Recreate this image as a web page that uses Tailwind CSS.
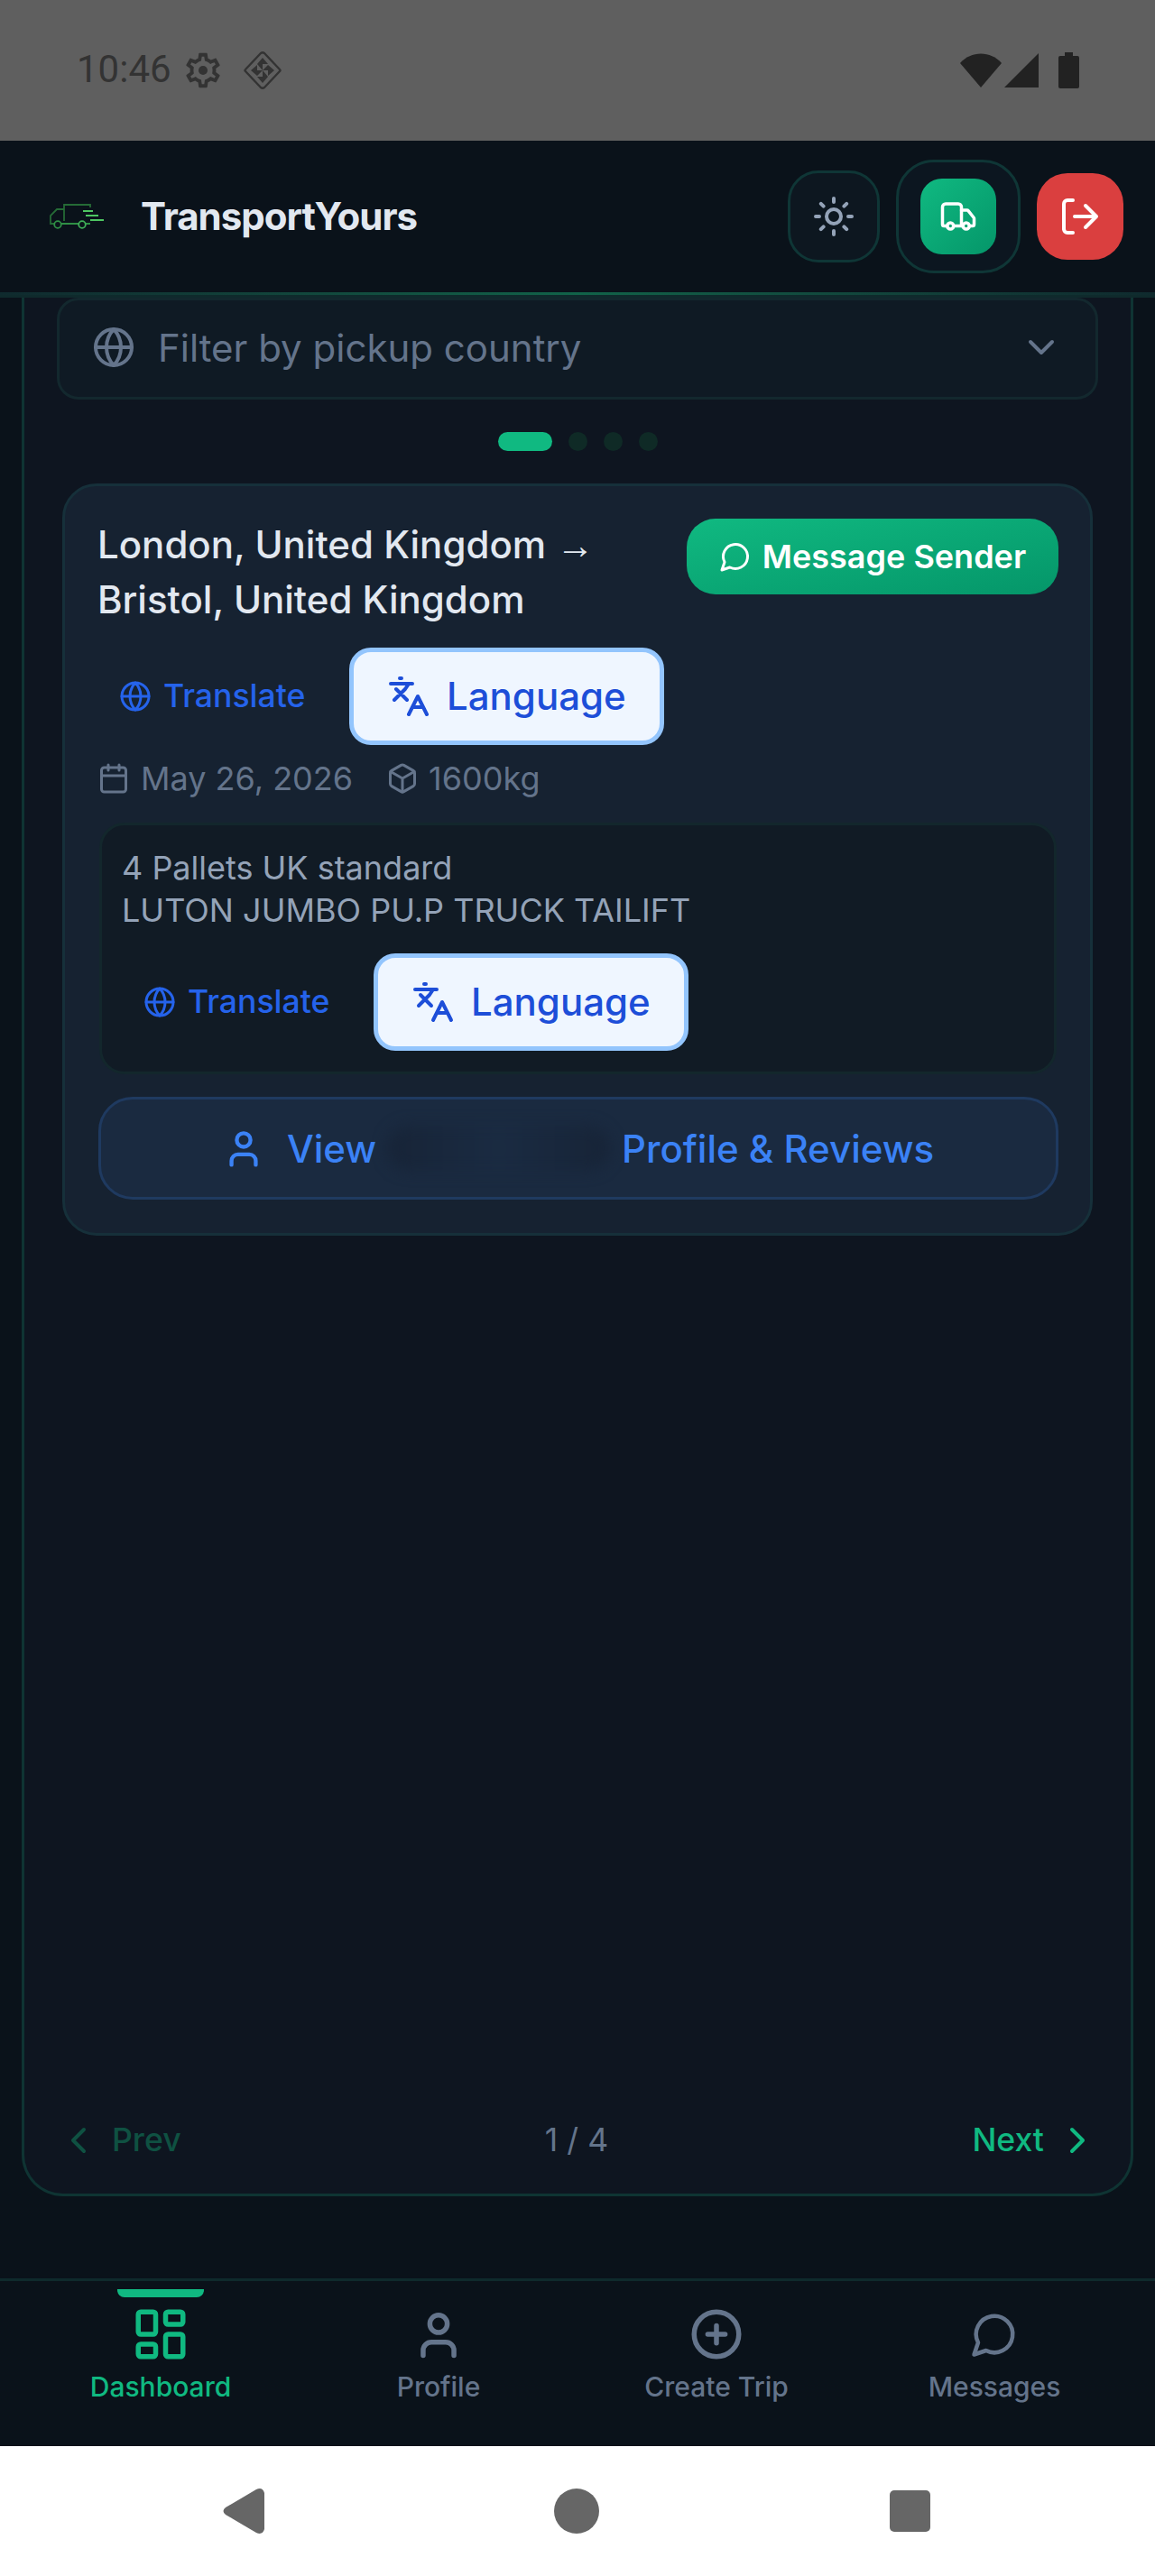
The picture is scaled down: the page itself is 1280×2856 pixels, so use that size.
<!DOCTYPE html>
<html lang="en">
<head>
    <meta charset="UTF-8">
    <title>TransportYours</title>
    <meta name="viewport" content="width=device-width, initial-scale=1.0">
    <script src="https://cdn.jsdelivr.net/npm/@tailwindcss/browser@4"></script>
</head>
<body class="bg-[#0a121a] font-['Inter',sans-serif]">
<div class="w-[1280px] h-[2856px] flex flex-col overflow-hidden">

    <!-- Status bar -->
    <div class="h-[156px] shrink-0 bg-[#5f5f5f] flex items-center pl-[85px] pr-[84px] font-['Roboto',sans-serif]">
        <span class="text-[42px] leading-none text-[#333333] mt-[-2px]">10:46</span>
        <svg class="w-[46px] h-[46px] ml-[12px]" viewBox="0 0 24 24" fill="#333333"><path d="M19.43 12.98c.04-.32.07-.64.07-.98 0-.34-.03-.66-.07-.98l2.11-1.65c.19-.15.24-.42.12-.64l-2-3.46c-.09-.16-.26-.25-.44-.25-.06 0-.12.01-.17.03l-2.49 1c-.52-.4-1.08-.73-1.69-.98l-.38-2.65C14.46 2.18 14.25 2 14 2h-4c-.25 0-.46.18-.49.42l-.38 2.65c-.61.25-1.17.59-1.69.98l-2.49-1c-.06-.02-.12-.03-.18-.03-.17 0-.34.09-.43.25l-2 3.46c-.13.22-.07.49.12.64l2.11 1.65c-.04.32-.07.65-.07.98 0 .33.03.66.07.98l-2.11 1.65c-.19.15-.24.42-.12.64l2 3.46c.09.16.26.25.44.25.06 0 .12-.01.17-.03l2.49-1c.52.4 1.08.73 1.69.98l.38 2.65c.03.24.24.42.49.42h4c.25 0 .46-.18.49-.42l.38-2.65c.61-.25 1.17-.59 1.69-.98l2.49 1c.06.02.12.03.18.03.17 0 .34-.09.43-.25l2-3.46c.12-.22.07-.49-.12-.64l-2.11-1.65zm-1.98-1.71c.04.31.05.52.05.73 0 .21-.02.43-.05.73l-.14 1.13.89.7 1.08.84-.7 1.21-1.27-.51-1.04-.42-.9.68c-.43.32-.84.56-1.25.73l-1.06.43-.16 1.13-.2 1.35h-1.4l-.19-1.35-.16-1.13-1.06-.43c-.43-.18-.83-.41-1.23-.71l-.91-.7-1.06.43-1.27.51-.7-1.21 1.08-.84.89-.7-.14-1.13c-.03-.31-.05-.54-.05-.74s.02-.43.05-.73l.14-1.13-.89-.7-1.08-.84.7-1.21 1.27.51 1.04.42.9-.68c.43-.32.84-.56 1.25-.73l1.06-.43.16-1.13.2-1.35h1.39l.19 1.35.16 1.13 1.06.43c.43.18.83.41 1.23.71l.91.7 1.06-.43 1.27-.51.7 1.21-1.07.85-.89.7.14 1.13z"/><circle cx="12" cy="12" r="2.6"/></svg>
        <svg class="w-[42px] h-[42px] ml-[22px]" viewBox="0 0 42 42" fill="none"><path d="M19 2q2-1.500 4 0L40 20q1 1 0 2L23 40q-2 1.500-4 0L2 22q-1-1 0-2z" stroke="#333333" stroke-width="2.4" stroke-linejoin="round"/><path d="M21 7 27 14 21 14 21 21 15 14zM8 21 15 15 15 21 21 21 15 27zM34 21 27 27 27 21 21 21 27 15zM21 35 15 28 21 28 21 21 27 28z" fill="#333333"/></svg>
        <div class="ml-auto flex items-center">
            <svg class="w-[46px] h-[38px]" viewBox="0 0 46 38"><path d="M0 11C12-3 34-3 46 11L23 38z" fill="#222222"/></svg>
            <svg class="w-[38px] h-[38px] ml-[3px]" viewBox="0 0 38 38"><path d="M38 0v38H0z" fill="#222222"/></svg>
            <svg class="w-[23px] h-[40px] ml-[22px]" viewBox="0 0 23 40"><path d="M7 0h9v4h5q2 0 2 2v32q0 2-2 2H2q-2 0-2-2V6q0-2 2-2h5z" fill="#222222"/></svg>
        </div>
    </div>

    <!-- Header -->
    <header class="h-[174px] shrink-0 relative bg-[#0a121a] border-b-[3px] border-[#0f2a2c] flex items-center pl-[55px] pr-[35px] pb-[3px]">
        <svg class="w-[60px] h-[28px]" viewBox="0 0 60 28" fill="none" stroke-width="1.8">
            <path d="M16 19V1h29v3M16 6H8L1 13v9h4" stroke="#256b36"/>
            <path d="M13 22h19M40 22h5" stroke="#2f8f45"/>
            <circle cx="9" cy="23" r="3.8" stroke="#2f8f45"/><circle cx="36" cy="23" r="3.8" stroke="#3fae58"/>
            <path d="M37 8h11M40 13h14M45 18h15" stroke="#4ec662"/>
        </svg>
        <span class="ml-[41px] text-[42px] leading-none font-bold tracking-[-1px] text-[#e2e8f0]">TransportYours</span>

        <div class="ml-auto flex items-center">
            <button class="w-[102px] h-[102px] rounded-[34px] border-[3px] border-[#0f3636] bg-[#0d1720] flex items-center justify-center">
                <svg class="w-[48px] h-[48px]" viewBox="0 0 24 24" fill="none" stroke="#94a3b8" stroke-width="2" stroke-linecap="round"><circle cx="12" cy="12" r="4"/><path d="M12 2v2M12 20v2M4.900 4.900l1.400 1.400M17.700 17.700l1.400 1.400M2 12h2M20 12h2M6.300 17.700l-1.400 1.400M19.100 4.900l-1.400 1.400"/></svg>
            </button>
            <div class="ml-[18px] w-[138px] h-[126px] rounded-[42px] border-[3px] border-[#0f3636] bg-[#0c1620] flex items-center justify-center">
                <div class="w-[84px] h-[84px] rounded-[24px] bg-linear-to-br from-[#10b981] to-[#059669] flex items-center justify-center">
                    <svg class="w-[42px] h-[42px]" viewBox="0 0 24 24" fill="none" stroke="#ffffff" stroke-width="2" stroke-linecap="round" stroke-linejoin="round"><path d="M14 18V6a2 2 0 0 0-2-2H4a2 2 0 0 0-2 2v11a1 1 0 0 0 1 1h2"/><path d="M15 18H9"/><path d="M19 18h2a1 1 0 0 0 1-1v-3.650a1 1 0 0 0-.22-.62l-3.480-4.350A1 1 0 0 0 17.520 8H14"/><circle cx="17" cy="18" r="2"/><circle cx="7" cy="18" r="2"/></svg>
                </div>
            </div>
            <button class="ml-[18px] w-[96px] h-[96px] rounded-[34px] bg-[#da3f3f] flex items-center justify-center">
                <svg class="w-[48px] h-[48px]" viewBox="0 0 24 24" fill="none" stroke="#ffffff" stroke-width="2" stroke-linecap="round" stroke-linejoin="round"><path d="M8 3H5a2 2 0 0 0-2 2v14a2 2 0 0 0 2 2h3"/><path d="M9 12h12M15 6l6 6-6 6"/></svg>
            </button>
        </div>
        <div class="absolute left-0 right-0 bottom-0 h-[3px] bg-linear-to-r from-[#0f2a2e] via-[#116349] to-[#0f2a2e]"></div>
    </header>

    <!-- Main panel -->
    <main class="flex-1 flex flex-col px-[24px]">
        <div class="h-[2105px] rounded-b-[46px] border-x-[3px] border-b-[3px] border-[#0f3433] bg-[#0e1520] flex flex-col overflow-hidden">

            <!-- Filter -->
            <div class="mx-[36px] h-[113px] shrink-0 rounded-[24px] border-[3px] border-[#13282e] bg-[#0f1a24] flex items-center pl-[36px] pr-[36px] pb-[3px]">
                <svg class="w-[48px] h-[48px]" viewBox="0 0 24 24" fill="none" stroke="#64748b" stroke-width="2" stroke-linecap="round" stroke-linejoin="round"><circle cx="12" cy="12" r="10"/><path d="M12 2a14.500 14.500 0 0 0 0 20 14.500 14.500 0 0 0 0-20M2 12h20"/></svg>
                <span class="ml-[25px] text-[42px] text-[#64748b]">Filter by pickup country</span>
                <svg class="ml-auto w-[48px] h-[48px]" viewBox="0 0 24 24" fill="none" stroke="#64748b" stroke-width="2" stroke-linecap="round" stroke-linejoin="round"><path d="m6 9 6 6 6-6"/></svg>
            </div>

            <!-- Dots -->
            <div class="mt-[36px] flex justify-center gap-[18px]">
                <span class="w-[60px] h-[21px] rounded-full bg-[#10b981]"></span>
                <span class="w-[21px] h-[21px] rounded-full bg-[#0f2a26]"></span>
                <span class="w-[21px] h-[21px] rounded-full bg-[#0f2a26]"></span>
                <span class="w-[21px] h-[21px] rounded-full bg-[#0f2a26]"></span>
            </div>

            <!-- Trip card -->
            <div class="mt-[36px] mx-[42px] h-[834px] shrink-0 rounded-[38px] border-[3px] border-[#16303a] bg-[#162231] pl-[37px] pr-[35px] pt-[36px]">
                <div class="flex justify-between items-start">
                    <h2 class="-ml-[1px] -mt-[1px] text-[42px] leading-[60px] font-medium text-[#e2e8f0] w-[600px]">London, United Kingdom <span class="font-['Roboto'] font-normal">→</span> Bristol, United Kingdom</h2>
                    <button class="w-[412px] h-[84px] rounded-[32px] bg-linear-to-br from-[#10b981] to-[#059669] flex items-center justify-center gap-[12px] text-[36px] font-semibold text-white">
                        <svg class="w-[36px] h-[36px]" viewBox="0 0 24 24" fill="none" stroke="#ffffff" stroke-width="2" stroke-linecap="round" stroke-linejoin="round"><path d="M7.900 20A9 9 0 1 0 4 16.100L2 22Z"/></svg>
                        Message Sender
                    </button>
                </div>
                <div class="mt-[23px] flex items-center pl-[23px]">
                    <svg class="w-[36px] h-[36px]" viewBox="0 0 24 24" fill="none" stroke="#2563eb" stroke-width="2" stroke-linecap="round" stroke-linejoin="round"><circle cx="12" cy="12" r="10"/><path d="M12 2a14.500 14.500 0 0 0 0 20 14.500 14.500 0 0 0 0-20M2 12h20"/></svg>
                    <span class="ml-[13px] w-[157px] text-[35.6px] font-medium text-[#2563eb]">Translate</span>
                    <button class="ml-[49px] w-[349px] h-[108px] rounded-[24px] border-[5px] border-[#93c5fd] bg-[#eff6ff] flex items-center pl-[37px] gap-[18px] text-[42px] font-medium text-[#1d4ed8]">
                        <svg class="w-[48px] h-[48px]" viewBox="0 0 24 24" fill="none" stroke="#1d4ed8" stroke-width="2" stroke-linecap="round" stroke-linejoin="round"><path d="m5 8 6 6M4 14l6-6 2-3M2 5h12M7 2h1M22 22l-5-10-5 10M14 18h6"/></svg>
                        <span class="-mt-[2px]">Language</span>
                    </button>
                </div>
                <div class="mt-[12px] -ml-[1px] flex items-center text-[36px] leading-[50px] text-[#64748b]">
                    <svg class="w-[36px] h-[36px]" viewBox="0 0 24 24" fill="none" stroke="#64748b" stroke-width="2" stroke-linecap="round" stroke-linejoin="round"><path d="M8 2v4M16 2v4"/><rect width="18" height="18" x="3" y="4" rx="2"/><path d="M3 10h18"/></svg>
                    <span class="ml-[12px]">May 26, 2026</span>
                    <svg class="ml-[37px] w-[36px] h-[36px]" viewBox="0 0 24 24" fill="none" stroke="#64748b" stroke-width="2" stroke-linecap="round" stroke-linejoin="round"><path d="M21 8a2 2 0 0 0-1-1.730l-7-4a2 2 0 0 0-2 0l-7 4A2 2 0 0 0 3 8v8a2 2 0 0 0 1 1.730l7 4a2 2 0 0 0 2 0l7-4A2 2 0 0 0 21 16Z"/><path d="m3.300 7 8.700 5 8.700-5M12 22V12"/></svg>
                    <span class="ml-[11px]">1600kg</span>
                </div>
                <div class="mt-[24px] ml-[1px] mr-[2px] h-[279px] rounded-[28px] border-[3px] border-[#13272c] bg-[#111b25] pl-[22px] pt-[24px]">
                    <p class="text-[36px] leading-[47px] text-[#94a3b8]">4 Pallets UK standard<br>LUTON JUMBO PU.P TRUCK TAILIFT</p>
                    <div class="mt-[24px] flex items-center pl-[24px]">
                        <svg class="w-[36px] h-[36px]" viewBox="0 0 24 24" fill="none" stroke="#2563eb" stroke-width="2" stroke-linecap="round" stroke-linejoin="round"><circle cx="12" cy="12" r="10"/><path d="M12 2a14.500 14.500 0 0 0 0 20 14.500 14.500 0 0 0 0-20M2 12h20"/></svg>
                        <span class="ml-[13px] w-[157px] text-[35.6px] font-medium text-[#2563eb]">Translate</span>
                        <button class="ml-[49px] w-[349px] h-[108px] rounded-[24px] border-[5px] border-[#93c5fd] bg-[#eff6ff] flex items-center pl-[37px] gap-[18px] text-[42px] font-medium text-[#1d4ed8]">
                            <svg class="w-[48px] h-[48px]" viewBox="0 0 24 24" fill="none" stroke="#1d4ed8" stroke-width="2" stroke-linecap="round" stroke-linejoin="round"><path d="m5 8 6 6M4 14l6-6 2-3M2 5h12M7 2h1M22 22l-5-10-5 10M14 18h6"/></svg>
                            <span class="-mt-[2px]">Language</span>
                        </button>
                    </div>
                </div>
                <button class="mt-[25px] w-full h-[114px] rounded-[38px] border-[3px] border-[#1f3a60] bg-[#1a2a40] flex items-center text-[42px] font-medium text-[#3b82f6] pl-[132px] whitespace-nowrap">
                    <svg class="w-[52px] h-[52px]" viewBox="0 0 24 24" fill="none" stroke="#3b82f6" stroke-width="2" stroke-linecap="round" stroke-linejoin="round"><path d="M5.800 20.500V18.500a3.300 3.300 0 0 1 3.300-3.300h5.800a3.300 3.300 0 0 1 3.300 3.300v2"/><circle cx="12" cy="7.800" r="3.500"/></svg>
                    <span class="ml-[22px] w-[97px]">View</span>
                    <span class="ml-[14px] w-[247px] h-[50px] rounded-full bg-linear-to-r from-[#172437] via-[#1a2b42] to-[#172437] blur-[8px]"></span>
                    <span class="ml-[13px]">Profile &amp; Reviews</span>
                </button>
            </div>

            <!-- Pager -->
            <div class="mt-auto h-[60px] mb-[29px] flex items-center justify-between pl-[36px] pr-[35px] text-[35.6px] font-medium">
                <div class="flex items-center gap-[13px] text-[#0f5142]">
                    <svg class="w-[48px] h-[48px]" viewBox="0 0 24 24" fill="none" stroke="#0f5142" stroke-width="2" stroke-linecap="round" stroke-linejoin="round"><path d="m15 18-6-6 6-6"/></svg>
                    Prev
                </div>
                <span class="font-normal text-[#64748b]">1 / 4</span>
                <div class="flex items-center gap-[13px] text-[#10b981]">
                    Next
                    <svg class="w-[48px] h-[48px]" viewBox="0 0 24 24" fill="none" stroke="#10b981" stroke-width="2" stroke-linecap="round" stroke-linejoin="round"><path d="m9 18 6-6-6-6"/></svg>
                </div>
            </div>
        </div>
    </main>

    <!-- Bottom nav -->
    <nav class="h-[186px] shrink-0 border-t-[3px] border-[#0f2a2c] bg-[#0a121a] grid grid-cols-4 px-[24px]">
        <a class="relative flex flex-col items-center pt-[26px] text-[#10b981]">
            <span class="absolute top-[9px] w-[96px] h-[9px] rounded-b-[8px] bg-[#10b981]"></span>
            <svg class="w-[66px] h-[66px]" viewBox="0 0 24 24" fill="none" stroke="#10b981" stroke-width="2" stroke-linecap="round" stroke-linejoin="round"><rect width="7" height="9" x="3" y="3" rx="1"/><rect width="7" height="5" x="14" y="3" rx="1"/><rect width="7" height="9" x="14" y="12" rx="1"/><rect width="7" height="5" x="3" y="16" rx="1"/></svg>
            <span class="mt-[5px] text-[30px] leading-[40px] font-medium">Dashboard</span>
        </a>
        <a class="flex flex-col items-center pt-[26px] text-[#64748b]">
            <svg class="w-[66px] h-[66px]" viewBox="0 0 24 24" fill="none" stroke="#64748b" stroke-width="2" stroke-linecap="round" stroke-linejoin="round"><path d="M5.800 20.500V18.500a3.300 3.300 0 0 1 3.300-3.300h5.800a3.300 3.300 0 0 1 3.300 3.300v2"/><circle cx="12" cy="7.800" r="3.500"/></svg>
            <span class="mt-[5px] text-[30px] leading-[40px] font-medium">Profile</span>
        </a>
        <a class="flex flex-col items-center pt-[26px] text-[#64748b]">
            <svg class="w-[66px] h-[66px]" viewBox="0 0 24 24" fill="none" stroke="#64748b" stroke-width="2" stroke-linecap="round" stroke-linejoin="round"><circle cx="12" cy="12" r="9"/><path d="M8.500 12h7M12 8.500v7"/></svg>
            <span class="mt-[5px] text-[30px] leading-[40px] font-medium">Create Trip</span>
        </a>
        <a class="flex flex-col items-center pt-[26px] text-[#64748b]">
            <svg class="w-[54px] h-[54px] my-[6px]" viewBox="0 0 24 24" fill="none" stroke="#64748b" stroke-width="2" stroke-linecap="round" stroke-linejoin="round"><path d="M7.900 20A9 9 0 1 0 4 16.100L2 22Z"/></svg>
            <span class="mt-[5px] text-[30px] leading-[40px] font-medium">Messages</span>
        </a>
    </nav>

    <!-- Android nav bar -->
    <div class="h-[144px] shrink-0 bg-white relative">
        <svg class="absolute left-[247px] top-[47px] w-[47px] h-[50px]" viewBox="0 0 47 50"><path d="M3 21 37 1q7-3 9 4v40q-2 7-9 4L3 29q-5-4 0-8z" fill="#666666"/></svg>
        <span class="absolute left-[614px] top-[47px] w-[50px] h-[50px] rounded-full bg-[#666666]"></span>
        <span class="absolute left-[986px] top-[49px] w-[45px] h-[46px] rounded-[5px] bg-[#666666]"></span>
    </div>
</div>
</body>
</html>
